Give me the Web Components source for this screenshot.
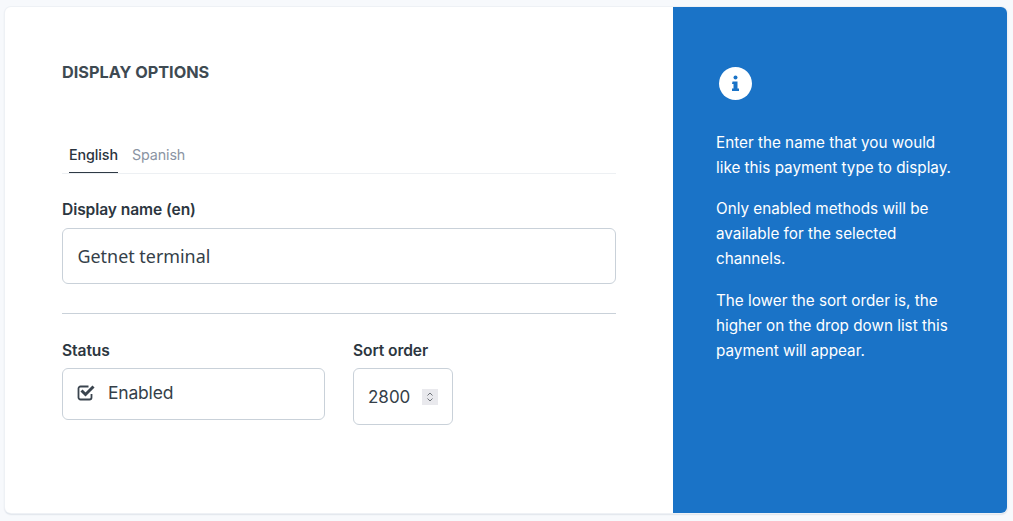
<!DOCTYPE html>
<html>
<head>
<meta charset="utf-8">
<style>
  html, body { margin: 0; height: 100%; background: #f7f9fc; }
  body { padding: 7px 6px 8px 5px; box-sizing: border-box; height: 521px; overflow: hidden; font-family: Inter, "Liberation Sans", sans-serif; }
</style>
</head>
<body>
<settings-card>
  <form-panel></form-panel>
  <info-panel slot="aside">
    <p>Enter the name that you would like this payment type to display.</p>
    <p>Only enabled methods will be available for the selected channels.</p>
    <p>The lower the sort order is, the higher on the drop down list this payment will appear.</p>
  </info-panel>
</settings-card>

<script>
const cardTemplate = document.createElement('template');
cardTemplate.innerHTML = `
  <style>
    :host { display: flex; height: 506px; background: #fff; border-radius: 6px; box-shadow: 0 0 0 1px #eef1f5, 0 1px 2px #aeb9c5; overflow: hidden; }
    .main { flex: 0 0 668px; }
    .aside { flex: 1; }
  </style>
  <div class="main"><slot></slot></div>
  <div class="aside"><slot name="aside"></slot></div>
`;
class SettingsCard extends HTMLElement {
  constructor() {
    super();
    this.attachShadow({mode: 'open'});
    this.shadowRoot.appendChild(cardTemplate.content.cloneNode(true));
  }
}
customElements.define('settings-card', SettingsCard);

const tabsTemplate = document.createElement('template');
tabsTemplate.innerHTML = `
  <style>
    :host { display: flex; gap: 14px; padding-left: 7px; border-bottom: 1px solid #edf0f3; height: 34px; box-sizing: border-box; font-size: 14.3px; letter-spacing: -0.1px; }
    span { height: 33px; line-height: 29px; box-sizing: border-box; color: #8a94a3; font-weight: 400; }
    span.on { color: #2a343e; font-weight: 500; border-bottom: 1px solid #2f3a45; }
  </style>
  <span class="on">English</span><span>Spanish</span>
`;
class LangTabs extends HTMLElement {
  constructor() {
    super();
    this.attachShadow({mode: 'open'});
    this.shadowRoot.appendChild(tabsTemplate.content.cloneNode(true));
  }
}
customElements.define('lang-tabs', LangTabs);

const fieldTemplate = document.createElement('template');
fieldTemplate.innerHTML = `
  <style>
    :host { display: block; }
    label { display: block; font-size: 15.6px; line-height: 18px; font-weight: 600; color: #2c3640; letter-spacing: -0.1px; padding-top: var(--label-shift, 0); margin-bottom: calc(9px - var(--label-shift, 0px)); }
  </style>
  <label></label>
  <slot></slot>
`;
class FormField extends HTMLElement {
  constructor() {
    super();
    this.attachShadow({mode: 'open'});
    this.shadowRoot.appendChild(fieldTemplate.content.cloneNode(true));
  }
  connectedCallback() {
    this.shadowRoot.querySelector('label').textContent = this.getAttribute('label');
  }
}
customElements.define('form-field', FormField);

const panelTemplate = document.createElement('template');
panelTemplate.innerHTML = `
  <style>
    :host { display: block; padding: 56px 57px 0 57px; }
    h2 { margin: 0 0 59px; font-size: 16.3px; line-height: 18px; font-weight: 700; color: #3e4a52; letter-spacing: -0.02px; }
    lang-tabs { margin-bottom: 27px; }
    .box { border: 1px solid #c9d1d9; border-radius: 6px; box-sizing: border-box; background: #fff; color: #353f49; display: flex; align-items: center; }
    .name { height: 56px; padding-left: 14.500px; font-family: "Noto Sans", sans-serif; font-size: 17.9px; }
    hr { border: 0; border-top: 1px solid #c9d1d9; margin: 29px 0 27px; }
    .row { display: flex; gap: 28px; align-items: flex-start; --label-shift: 1px; }
    .status { width: 263px; height: 52px; padding: 0 14px; gap: 13px; font-size: 17.5px; letter-spacing: -0.2px; padding-bottom: 3px; }
    .status svg { width: 18px; height: 17px; flex: none; }
    .sort { width: 100px; height: 57px; padding-left: 14px; font-size: 17px; }
    .spin { width: 16px; height: 16px; background: #e9e9ed; margin-left: 12px; display: flex; }
    .spin svg { width: 16px; height: 16px; }
  </style>
  <h2>DISPLAY OPTIONS</h2>
  <lang-tabs></lang-tabs>
  <form-field label="Display name (en)"><div class="box name">Getnet terminal</div></form-field>
  <hr>
  <div class="row">
    <form-field label="Status">
      <div class="box status">
        <svg viewBox="0 0 18 17"><path d="M14.500 10v3.500a2 2 0 0 1-2 2h-9a2 2 0 0 1-2-2v-9a2 2 0 0 1 2-2h8" fill="none" stroke="#3a444e" stroke-width="1.8"/><path d="M4.500 6.500l4 4 8-8" fill="none" stroke="#3a444e" stroke-width="3"/></svg>
        <span>Enabled</span>
      </div>
    </form-field>
    <form-field label="Sort order">
      <div class="box sort">
        <span>2800</span>
        <span class="spin"><svg viewBox="0 0 16 16"><path d="M5.500 6.500L8 4l2.500 2.500M5.500 9.500L8 12l2.500-2.500" fill="none" stroke="#6d7278" stroke-width="1"/></svg></span>
      </div>
    </form-field>
  </div>
`;
class FormPanel extends HTMLElement {
  constructor() {
    super();
    this.attachShadow({mode: 'open'});
    this.shadowRoot.appendChild(panelTemplate.content.cloneNode(true));
  }
}
customElements.define('form-panel', FormPanel);

const infoTemplate = document.createElement('template');
infoTemplate.innerHTML = `
  <style>
    :host { display: block; height: 506px; box-sizing: border-box; background: #1a73c7; color: #fff; padding: 60px 48px 0 43px; font-size: 15.25px; line-height: 25px; }
    svg { display: block; width: 33px; height: 33px; margin: 0 0 30px 3px; }
    ::slotted(p) { margin: 0 0 17px; }
    ::slotted(p:first-child) { margin-bottom: 16px; }
  </style>
  <svg viewBox="0 0 33 33">
    <circle cx="16.500" cy="16.500" r="16.500" fill="#fff"/>
    <circle cx="16.500" cy="10.500" r="2" fill="#1a73c7"/>
    <path d="M13.500 14.500h5v7h1.500v2.500h-7v-2.500h1.500v-4.500h-1.500z" fill="#1a73c7"/>
  </svg>
  <slot></slot>
`;
class InfoPanel extends HTMLElement {
  constructor() {
    super();
    this.attachShadow({mode: 'open'});
    this.shadowRoot.appendChild(infoTemplate.content.cloneNode(true));
  }
}
customElements.define('info-panel', InfoPanel);
</script>
</body>
</html>
